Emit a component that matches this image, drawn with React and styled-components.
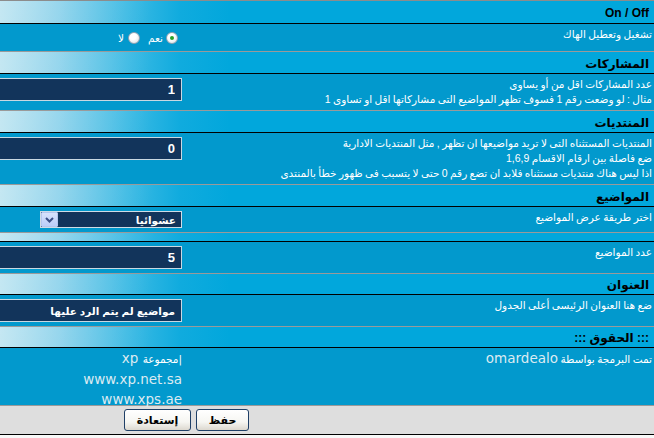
import React from "react";
import styled, { createGlobalStyle } from "styled-components";

const GlobalStyle = createGlobalStyle`
  html, body { margin: 0; padding: 0; background: #f8f8f8; }
  body { font-family: "Liberation Sans", "DejaVu Sans", sans-serif; }
  #root { width: 654px; }
`;

const Page = styled.div`
  width: 654px;
  direction: rtl;
  border-top: 1px solid #8c8c8c;
  font-family: "Liberation Sans", "DejaVu Sans", sans-serif;
`;

const HeaderBar = styled.div`
  height: ${(p) => p.$h}px;
  display: flex;
  align-items: center;
  padding: 2px 5px 0 0;
  box-sizing: border-box;
  border-bottom: 1px solid #000;
  background:
    linear-gradient(105deg, rgba(255,255,255,0.35) 0px, rgba(255,255,255,0.15) 70px, rgba(255,255,255,0) 150px),
    linear-gradient(to right, #a6dbec 0px, #7fcde9 60px, #3fbbe4 125px, #10abde 180px, #01a7dc 230px, #01a7dc 100%);
  color: #000;
  font-weight: bold;
  font-size: 12px;
  white-space: nowrap;
`;

const Row = styled.div`
  display: grid;
  grid-template-columns: 1fr 184px;
  background: #0299cd;
  border-bottom: 1px solid #9a9a9a;
  color: #fff;
`;

const Label = styled.div`
  padding: 3px 2px 3px 0;
  font-size: 10.5px;
  line-height: 15px;
  word-spacing: -0.5px;
  white-space: nowrap;
`;

const Value = styled.div`
  padding: ${(p) => (p.$flush ? "0 2px 0 0" : "4px 2px 4px 0")};
  display: flex;
  align-items: flex-start;
`;

const TextField = styled.input`
  width: 182px;
  height: 23px;
  box-sizing: border-box;
  margin: 0;
  border: 1px solid #c9d8e2;
  border-left: 0;
  background: #12345b;
  color: #fff;
  font-family: "Liberation Sans", "DejaVu Sans", sans-serif;
  font-weight: bold;
  font-size: ${(p) => (p.$arabic ? "10.5px" : "13px")};
  text-align: right;
  direction: rtl;
  padding: 0 6px;
  outline: none;
`;

const RadioGroup = styled.div`
  height: 19px;
  display: flex;
  align-items: center;
  padding-right: 4px;
  font-size: 10.5px;
`;

const Radio = styled.span`
  width: 12px;
  height: 12px;
  box-sizing: border-box;
  border-radius: 50%;
  border: 1px solid #91a3b3;
  background: radial-gradient(circle at 40% 35%, #ffffff 35%, #d5dbe0 100%);
  display: inline-flex;
  align-items: center;
  justify-content: center;
  margin-left: ${(p) => p.$gap}px;
  &::after {
    content: "";
    width: 4px;
    height: 4px;
    border-radius: 50%;
    background: ${(p) => (p.$checked ? "#27a327" : "transparent")};
  }
`;

const RadioText = styled.span`
  margin-left: ${(p) => p.$gap}px;
`;

const SelectBox = styled.div`
  width: 142px;
  height: 17px;
  box-sizing: border-box;
  border: 1px solid #cfdce6;
  background: #12345b;
  display: flex;
  align-items: center;
`;

const SelectText = styled.span`
  flex: 1;
  padding-right: 5px;
  color: #fff;
  font-weight: bold;
  font-size: 10.5px;
`;

const DropButton = styled.span`
  width: 17px;
  height: 15px;
  box-sizing: border-box;
  border: 1px solid #b5c5ee;
  border-radius: 1px;
  background: linear-gradient(#d7e2fc, #bccdf8);
  display: flex;
  align-items: center;
  justify-content: center;
`;

const Credits = styled.div`
  height: 57px;
  font-family: "DejaVu Sans", sans-serif;
  font-size: 13.5px;
  line-height: 20px;
  color: #dcebf2;
  text-align: right;
`;

const SmallArabic = styled.span`
  font-size: 10.5px;
  color: #fff;
`;

const Latin = styled.span`
  font-family: "DejaVu Sans", sans-serif;
  font-size: 13.5px;
  word-spacing: 0;
  color: #dcebf2;
`;

const Footer = styled.div`
  height: 28px;
  background: #dedede;
  border-bottom: 1px solid #000;
  display: flex;
  align-items: center;
  gap: 5px;
  padding-right: 405px;
`;

const Button = styled.button`
  width: ${(p) => p.$w}px;
  height: 22px;
  margin: 0;
  padding: 0;
  border: 1px solid #1f3f66;
  border-radius: 3px;
  background: linear-gradient(#ffffff 0%, #f6f6f2 60%, #dcd8cf 100%);
  font-family: "Liberation Sans", "DejaVu Sans", sans-serif;
  font-weight: bold;
  font-size: 11px;
  color: #000;
`;

const Chevron = () => (
  <svg width="9" height="6" viewBox="0 0 9 6">
    <path d="M1 1 L4.5 4.5 L8 1" fill="none" stroke="#3b4f86" strokeWidth="2" />
  </svg>
);

export default function App() {
  return (
    <>
      <GlobalStyle />
      <Page>
        <HeaderBar $h={23}>On / Off</HeaderBar>
        <Row>
          <Label>تشغيل وتعطيل الهاك</Label>
          <Value>
            <RadioGroup>
              <Radio $checked $gap={3} />
              <RadioText $gap={8}>نعم</RadioText>
              <Radio $gap={4} />
              <RadioText $gap={0}>لا</RadioText>
            </RadioGroup>
          </Value>
        </Row>

        <HeaderBar $h={22}>المشاركات</HeaderBar>
        <Row>
          <Label>
            عدد المشاركات اقل من أو يساوى
            <br />
            مثال : لو وضعت رقم 1 فسوف تظهر المواضيع التى مشاركاتها اقل او تساوى 1
          </Label>
          <Value>
            <TextField defaultValue="1" />
          </Value>
        </Row>

        <HeaderBar $h={22}>المنتديات</HeaderBar>
        <Row>
          <Label>
            المنتديات المستثناه التى لا تريد مواضيعها ان تظهر , مثل المنتديات الادارية
            <br />
            ضع فاصلة بين ارقام الاقسام 1,6,9
            <br />
            اذا ليس هناك منتديات مستثناه فلابد ان تضع رقم 0 حتى لا يتسبب فى ظهور خطأ بالمنتدى
          </Label>
          <Value>
            <TextField defaultValue="0" />
          </Value>
        </Row>

        <HeaderBar $h={22}>المواضيع</HeaderBar>
        <Row>
          <Label>اختر طريقة عرض المواضيع</Label>
          <Value>
            <SelectBox>
              <SelectText>عشوائيا</SelectText>
              <DropButton>
                <Chevron />
              </DropButton>
            </SelectBox>
          </Value>
        </Row>

        <HeaderBar $h={9} />
        <Row>
          <Label>عدد المواضيع</Label>
          <Value>
            <TextField defaultValue="5" />
          </Value>
        </Row>

        <HeaderBar $h={21}>العنوان</HeaderBar>
        <Row>
          <Label>ضع هنا العنوان الرئيسى أعلى الجدول</Label>
          <Value>
            <TextField $arabic defaultValue="مواضيع لم يتم الرد عليها" />
          </Value>
        </Row>

        <HeaderBar $h={21}>::: الحقوق :::</HeaderBar>
        <Row>
          <Label>
            تمت البرمجة بواسطة <Latin>omardealo</Latin>
          </Label>
          <Value $flush>
            <Credits>
              <SmallArabic>|مجموعة</SmallArabic> xp
              <br />
              www.xp.net.sa
              <br />
              www.xps.ae
            </Credits>
          </Value>
        </Row>

        <Footer>
          <Button $w={53}>حفظ</Button>
          <Button $w={67}>إستعادة</Button>
        </Footer>
      </Page>
    </>
  );
}
